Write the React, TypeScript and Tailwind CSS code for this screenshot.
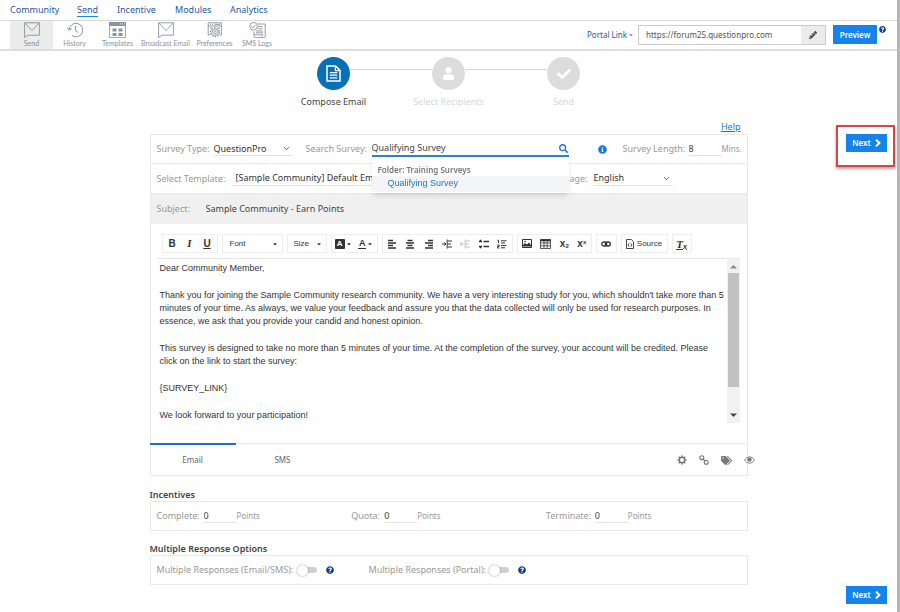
import { useState } from "react";
import type { ReactNode } from "react";
import {
  FaCaretDown,
  FaCheck,
  FaInfoCircle,
  FaPencilAlt,
  FaQuestionCircle,
  FaSearch,
  FaTags,
  FaUser,
} from "react-icons/fa";
import { FiChevronDown } from "react-icons/fi";

const navLinks = [
  { label: "Community", width: "w-[67px]" },
  { label: "Send", width: "w-10", active: true },
  { label: "Incentive", width: "w-[58px]" },
  { label: "Modules", width: "w-[55px]" },
  { label: "Analytics", width: "w-12" },
];

function MailIcon() {
  return (
    <svg width="16" height="16" viewBox="0 0 16 16" fill="none" stroke="currentColor" strokeWidth="0.9">
      <path d="M.6.8h14.8v12.4H4L.6 15.6z" />
      <path d="M.8 1L8 8.6 15.2 1" />
    </svg>
  );
}

function HistoryIcon() {
  return (
    <svg width="16" height="16" viewBox="0 0 16 16" fill="none" stroke="currentColor" strokeWidth="1">
      <path d="M2.2 7.5A6.8 6.8 0 1 1 5 13.6" />
      <path d="M.4 5.6l1.8 2.6 2.6-1.8M8.4 3.8v4.6l3 2.4" />
    </svg>
  );
}

function TemplatesIcon() {
  return (
    <svg width="17" height="16" viewBox="0 0 17 16" fill="none" stroke="currentColor">
      <path d="M.5.5h16v15H.5z" strokeWidth="0.8" />
      <path d="M0 0h17v4H0z" fill="currentColor" stroke="none" />
      <path d="M11 1.8h1M13 1.8h1M15 1.8h1" stroke="#fff" strokeWidth="0.8" />
      <path d="M3.5 6.5h4v3h-4zM9.5 6.5h4v3h-4zM3.5 11h4v3h-4zM9.5 11h4v3h-4z" fill="currentColor" stroke="none" />
    </svg>
  );
}

function PreferencesIcon() {
  return (
    <svg width="16" height="16" viewBox="0 0 16 16" fill="none" stroke="currentColor" strokeWidth="0.9">
      <path d="M3 13H1.2V.8h13.2V13h-1.6M1.2 4h13.2M3 2.4h1M5 2.4h1M7.5 2.4h5.5M3 6h2M11 6h2" />
      <circle cx="8" cy="10.2" r="3.2" />
      <circle cx="8" cy="10.2" r="1.3" />
      <circle cx="8" cy="10.2" r="4.5" strokeDasharray="1.6 1.2" strokeWidth="1.3" />
    </svg>
  );
}

function LogsIcon() {
  return (
    <svg width="17" height="16" viewBox="0 0 17 16" fill="none" stroke="currentColor" strokeWidth="0.9">
      <circle cx="4.6" cy="4.2" r="3.8" />
      <path d="M2.6 4.4l1.4 1.4 2.6-3M8.6 2h7.6v12.4a1.2 1.2 0 0 1-1.2 1.2H6.4a1.4 1.4 0 0 1-1.4-1.4V9.4M5 12.8h8.4v1.6M8.8 4.6h5M8.8 6.8h5M7 9h6.8M7 10.8h6.8" />
    </svg>
  );
}

const tools = [
  { label: "Send", icon: <MailIcon />, className: "w-[43px] bg-[#ececec]" },
  { label: "History", icon: <HistoryIcon />, className: "w-[43px]" },
  { label: "Templates", icon: <TemplatesIcon />, className: "w-[43px]" },
  { label: "Broadcast Email", icon: <MailIcon />, className: "w-[53px]" },
  { label: "Preferences", icon: <PreferencesIcon />, className: "w-[45px]" },
  { label: "SMS Logs", icon: <LogsIcon />, className: "w-10" },
];

function DocumentIcon() {
  return (
    <svg width="15" height="17" viewBox="0 0 15 17" fill="none" stroke="currentColor" strokeWidth="1.5">
      <path d="M1 1h8.6L14 5.4V16H1z" />
      <path d="M9.4 1v4.6H14M3.8 7.6h7.4M3.8 10.2h7.4M3.8 12.8h7.4" strokeWidth="1.2" />
    </svg>
  );
}

type StepProps = {
  label: string;
  icon: ReactNode;
  active?: boolean;
  first?: boolean;
  last?: boolean;
};

function Step({ label, icon, active, first, last }: StepProps) {
  return (
    <li className="flex flex-col items-center">
      <div className="flex w-full items-start">
        <span className={`mt-3 h-px flex-1 ${first ? "" : "bg-[#d4d4d4]"}`} />
        <span
          className={`flex size-[33px] items-center justify-center rounded-full text-white ${
            active ? "bg-[#0870b5]" : "bg-[#dcdcdc]"
          }`}
        >
          {icon}
        </span>
        <span className={`mt-3 h-px flex-1 ${last ? "" : "bg-[#d4d4d4]"}`} />
      </div>
      <span className={`mt-1 leading-4 ${active ? "text-[#444]" : "text-[#d8d8d8]"}`}>{label}</span>
    </li>
  );
}

function NextButton() {
  return (
    <button
      type="button"
      className="flex h-[18px] w-[41px] items-center justify-center gap-1 bg-[#1583e9] text-[8px] font-semibold text-white"
    >
      Next
      <svg width="6" height="8" viewBox="0 0 6 8" fill="none" stroke="currentColor" strokeWidth="2">
        <path d="M1 .8L4.4 4 1 7.2" />
      </svg>
    </button>
  );
}

type SelectProps = {
  id: string;
  value: string;
  className: string;
};

function Select({ id, value, className }: SelectProps) {
  return (
    <div className={`flex h-[14px] items-center border-b border-[#e4e4e4] text-[#333] ${className}`}>
      <select id={id} className="min-w-0 flex-1 appearance-none bg-transparent outline-none">
        <option>{value}</option>
      </select>
      <FiChevronDown size={9} className="mr-[2px] shrink-0" />
    </div>
  );
}

function ToolGroup({ children, className }: { children: ReactNode; className: string }) {
  return (
    <div className={`flex h-[19px] items-center justify-around border border-[#eee] text-[#333] ${className}`}>
      {children}
    </div>
  );
}

function ToolButton({ label, children }: { label: string; children: ReactNode }) {
  return (
    <button type="button" aria-label={label} className="flex items-center justify-center">
      {children}
    </button>
  );
}

function LineIcon({ d, className }: { d: string; className?: string }) {
  return (
    <svg width="10" height="10" viewBox="0 0 10 10" stroke="currentColor" strokeWidth="1.4" fill="none" className={className}>
      <path d={d} />
    </svg>
  );
}

function EditorToolbar() {
  return (
    <div className="flex gap-1 border-b border-[#e6e6e6] pt-[10px] pb-[5px] pl-[5px] font-['Liberation_Sans',sans-serif] text-[8px]">
      <ToolGroup className="w-14 text-[10px]">
        <button type="button" className="font-bold">B</button>
        <button type="button" className="font-['Liberation_Serif',serif] text-[11px] font-bold italic">I</button>
        <button type="button" className="font-bold underline">U</button>
      </ToolGroup>
      <ToolGroup className="w-[61px]">
        <button type="button" className="flex w-full items-center justify-between pr-1 pl-[7px]">
          Font <FaCaretDown size={6} />
        </button>
      </ToolGroup>
      <ToolGroup className="w-10">
        <button type="button" className="flex w-full items-center justify-between pr-1 pl-[6px]">
          Size <FaCaretDown size={6} />
        </button>
      </ToolGroup>
      <ToolGroup className="w-[47px]">
        <ToolButton label="Background color">
          <span className="mr-px flex size-[10px] items-center justify-center rounded-[1px] bg-[#333] font-bold text-white">A</span>
          <FaCaretDown size={6} />
        </ToolButton>
        <ToolButton label="Text color">
          <span className="mr-px border-b border-[#333] px-px text-[9px] leading-[9px] font-bold">A</span>
          <FaCaretDown size={6} />
        </ToolButton>
      </ToolGroup>
      <ToolGroup className="w-[131px]">
        <ToolButton label="Align left"><LineIcon d="M1 1.5h5M1 4h8M1 6.5h5M1 9h8" /></ToolButton>
        <ToolButton label="Align center"><LineIcon d="M2.5 1.5h5M1 4h8M2.5 6.5h5M1 9h8" /></ToolButton>
        <ToolButton label="Align right"><LineIcon d="M4 1.5h5M1 4h8M4 6.5h5M1 9h8" /></ToolButton>
        <ToolButton label="Increase indent"><LineIcon d="M0 5h4M2.4 3.4L4 5 2.4 6.6M5.2.5v9M6 2h4M6 5h3M6 8h4" className="[stroke-width:1]" /></ToolButton>
        <ToolButton label="Decrease indent"><LineIcon d="M0 5h4M1.6 3.4L0 5l1.6 1.6M5.2.5v9M6 2h4M6 5h3M6 8h4" className="text-[#bbb] [stroke-width:1]" /></ToolButton>
        <ToolButton label="Bulleted list"><LineIcon d="M0 2.5h3M0 7.5h3M4.5 2.5H10M4.5 7.5H10M.7 1.5h1.6M.7 8.5h1.6" /></ToolButton>
        <ToolButton label="Numbered list"><LineIcon d="M.5 1.2h1v3M.4 6h1.8v1.4H.6V9h1.8M4 1.8h5.5M4 4h4M4 6.6h5.5M4 8.8h4" className="[stroke-width:1]" /></ToolButton>
      </ToolGroup>
      <ToolGroup className="w-[75px]">
        <ToolButton label="Image">
          <svg width="10" height="9" viewBox="0 0 10 9">
            <path d="M.5.5h9v8h-9z" fill="none" stroke="currentColor" />
            <path d="M1 7.6V6l2-2 2 1.5L7 3.4 9 6v1.6z" fill="currentColor" />
            <circle cx="3" cy="2.5" r="0.8" fill="currentColor" />
          </svg>
        </ToolButton>
        <ToolButton label="Table">
          <svg width="11" height="10" viewBox="0 0 11 10" fill="none" stroke="currentColor" strokeWidth="0.8">
            <path d="M.5.5h10v9H.5zM.5 4h10M.5 6.8h10M4 1v8M7.2 1v8" />
            <path d="M.5 1.3h10" strokeWidth="2" />
          </svg>
        </ToolButton>
        <button type="button" className="text-[10px] leading-3 font-bold">x<sub className="text-[6px]">2</sub></button>
        <button type="button" className="text-[10px] leading-3 font-bold">x<sup className="text-[6px]">x</sup></button>
      </ToolGroup>
      <ToolGroup className="w-[21px]">
        <ToolButton label="Link">
          <svg width="10" height="6" viewBox="0 0 10 6" fill="none" stroke="currentColor" strokeWidth="1.3">
            <rect x="0.7" y="1" width="5" height="4" rx="2" />
            <rect x="4.3" y="1" width="5" height="4" rx="2" />
          </svg>
        </ToolButton>
      </ToolGroup>
      <ToolGroup className="w-[47px]">
        <button type="button" className="flex items-center gap-[3px]">
          <svg width="8" height="10" viewBox="0 0 8 10" fill="none" stroke="currentColor" strokeWidth="0.9">
            <path d="M.5.5h4.8l2.2 2.2v6.8h-7zM3.2 4.4L2 6l1.2 1.6M4.8 4.4L6 6 4.8 7.6" />
          </svg>
          Source
        </button>
      </ToolGroup>
      <ToolGroup className="w-5">
        <button type="button" aria-label="Remove format" className="font-['Liberation_Serif',serif] text-[11px] leading-3 font-bold italic underline">
          T<sub className="font-['Liberation_Sans',sans-serif] text-[7px]">x</sub>
        </button>
      </ToolGroup>
    </div>
  );
}

function EditorBody() {
  return (
    <div className="flex h-[164px]">
      <div
        contentEditable
        suppressContentEditableWarning
        role="textbox"
        aria-label="Email body"
        className="flex flex-1 flex-col gap-[14px] pt-[3px] pl-[3px] font-['Liberation_Sans',sans-serif] text-[9px] leading-[13px] text-[#333] outline-none"
      >
        <p>Dear Community Member,</p>
        <p>
          Thank you for joining the Sample Community research community. We have a very interesting study for you, which
          shouldn't take more than 5 minutes of your time. As always, we value your feedback and assure you that the data
          collected will only be used for research purposes. In essence, we ask that you provide your candid and honest
          opinion.
        </p>
        <p>
          This survey is designed to take no more than 5 minutes of your time. At the completion of the survey, your
          account will be credited. Please click on the link to start the survey:
        </p>
        <p>{"{SURVEY_LINK}"}</p>
        <p>We look forward to your participation!</p>
      </div>
      <div className="flex w-[13px] flex-col items-center bg-[#f1f1f1]">
        <svg width="7" height="14" viewBox="0 0 7 14" fill="#888">
          <path d="M0 9.5h7L3.5 6z" />
        </svg>
        <div className="h-[114px] w-[11px] bg-[#c1c1c1]" />
        <svg width="7" height="14" viewBox="0 0 7 14" fill="#444" className="mt-auto">
          <path d="M0 4.5h7L3.5 8z" />
        </svg>
      </div>
    </div>
  );
}

const points = [
  { label: "Complete:", width: "w-[47px]" },
  { label: "Quota:", width: "w-[33px]" },
  { label: "Terminate:", width: "w-[49px]" },
];

const toggles = [
  { label: "Multiple Responses (Email/SMS):", width: "w-[140px]" },
  { label: "Multiple Responses (Portal):", width: "w-[120px]" },
];

function App() {
  const [search, setSearch] = useState("Qualifying Survey");

  return (
    <div className="flex min-h-screen flex-col border-r-[3px] border-[#b5b5b5] bg-white font-['Noto_Sans',sans-serif] text-[9px] text-[#999]">
      <nav className="flex h-[21px] items-center border-b border-[#d9d9d9] pl-[10px] text-[#1b5a9e]">
        {navLinks.map((link) => (
          <div key={link.label} className={link.width}>
            <a href="#" className={`leading-3 ${link.active ? "border-b border-[#1b87e6]" : ""}`}>
              {link.label}
            </a>
          </div>
        ))}
      </nav>

      <header className="flex h-[30px] items-start justify-between border-b-2 border-[#dedede] pr-[11px] pl-[10px]">
        <div className="flex">
          {tools.map((tool) => (
            <button
              key={tool.label}
              type="button"
              className={`flex h-7 flex-col items-center pt-px font-['Lato',sans-serif] text-[7px] leading-[10px] whitespace-nowrap text-[#8a929a] ${tool.className}`}
            >
              {tool.icon}
              {tool.label}
            </button>
          ))}
        </div>
        <div className="flex items-start pt-1 text-[8px]">
          <button type="button" className="mr-1 flex h-[19px] items-center gap-px text-[#1b5a9e]">
            Portal Link <FaCaretDown size={6} className="text-[#888]" />
          </button>
          <div className="mr-[7px] flex h-5 border border-[#ccc]">
            <input
              aria-label="Portal link"
              readOnly
              value="https://forum25.questionpro.com"
              className="w-[162px] pl-[7px] text-[#555] outline-none"
            />
            <button type="button" aria-label="Edit" className="flex w-6 items-center justify-center bg-[#ececec] text-[#444]">
              <FaPencilAlt size={8} />
            </button>
          </div>
          <button type="button" className="h-[19px] w-11 rounded-[1px] bg-[#1583e9] font-semibold text-white">
            Preview
          </button>
          <FaQuestionCircle size={7} className="ml-[2px] mt-px text-[#0b3f8a]" />
        </div>
      </header>

      <ol className="mx-auto mt-[6px] grid w-full max-w-[345px] grid-cols-3">
        <Step label="Compose Email" icon={<DocumentIcon />} active first />
        <Step label="Select Recipients" icon={<FaUser size={13} />} />
        <Step label="Send" icon={<FaCheck size={14} />} last />
      </ol>

      <main className="mt-[10px] grid grid-cols-[1fr_minmax(0,598px)_1fr]">
        <div />
        <form>
          <div className="flex h-[14px] justify-end pr-[7px] leading-[14px]">
            <a href="#" className="text-[#1b78d8] underline">Help</a>
          </div>

          <section className="border border-[#e8e8e8]">
            <div className="flex h-[29px] items-center border-b border-[#e8e8e8] pl-[6px] whitespace-nowrap">
              <label htmlFor="type" className="w-[57px]">Survey Type:</label>
              <Select id="type" value="QuestionPro" className="mr-[13px] w-[79px]" />
              <label htmlFor="search" className="w-[66px]">Search Survey:</label>
              <div className="relative mr-[29px] flex h-[15px] w-[197px] items-center border-b-2 border-[#2a82cf]">
                <input
                  id="search"
                  autoFocus
                  autoComplete="off"
                  value={search}
                  onChange={(e) => setSearch(e.target.value)}
                  className="min-w-0 flex-1 text-[#444] outline-none"
                />
                <FaSearch size={9} className="mr-px text-[#1b78d8]" />
                <div className="absolute top-[15px] left-0 z-10 h-9 w-full bg-white pt-[7px] text-[8px] font-semibold text-[#777] shadow-md">
                  <div className="pl-[6px] leading-3">Folder: Training Surveys</div>
                  <button
                    type="button"
                    className="block h-4 w-full bg-[#f3f5f6] pl-4 text-left font-['Liberation_Sans',sans-serif] text-[9px] font-normal text-[#1b78d8]"
                  >
                    Qualifying Survey
                  </button>
                </div>
              </div>
              <FaInfoCircle size={9} className="mr-4 text-[#1b78d8]" />
              <label htmlFor="length" className="w-[66px]">Survey Length:</label>
              <input id="length" defaultValue="8" className="h-[14px] w-[33px] border-b border-[#e4e4e4] text-[#444] outline-none" />
              <span className="text-[8px]">Mins.</span>
            </div>

            <div className="flex h-[30px] items-center border-b border-[#e8e8e8] pl-[6px] whitespace-nowrap">
              <label htmlFor="template" className="w-[74px]">Select Template:</label>
              <Select id="template" value="[Sample Community] Default Email Template" className="w-[300px] pl-[5px]" />
              <label htmlFor="language" className="w-[63px] pr-[6px] text-right">Language:</label>
              <Select id="language" value="English" className="w-[79px]" />
            </div>

            <div className="flex h-[30px] items-center bg-[#f0f0f0] pl-[6px]">
              <label htmlFor="subject" className="w-[49px]">Subject:</label>
              <input id="subject" defaultValue="Sample Community - Earn Points" className="flex-1 bg-transparent text-[#444] outline-none" />
            </div>

            <div className="pr-[7px] pb-5 pl-[6px]">
              <EditorToolbar />
              <EditorBody />
            </div>

            <div className="flex h-8 items-start justify-between border-t border-[#e8e8e8] text-[8px] text-[#666]">
              <div className="-ml-px flex" role="tablist">
                <button type="button" role="tab" aria-selected="true" className="-mt-px h-8 w-[86px] border-t-2 border-[#1b6fc4]">
                  Email
                </button>
                <button type="button" role="tab" aria-selected="false" className="h-8 w-[94px]">SMS</button>
              </div>
              <div className="-mr-2 flex h-8 items-center gap-3 text-[#777]">
                <button type="button" aria-label="Settings">
                  <svg width="10" height="10" viewBox="0 0 10 10" fill="none" stroke="currentColor">
                    <circle cx="5" cy="5" r="2.7" strokeWidth="1.5" />
                    <path d="M5 .4v1.4M5 8.2v1.4M.4 5h1.4M8.2 5h1.4M1.7 1.7l1 1M7.3 7.3l1 1M1.7 8.3l1-1M7.3 2.7l1-1" strokeWidth="1.6" />
                  </svg>
                </button>
                <button type="button" aria-label="Insert link">
                  <svg width="10" height="10" viewBox="0 0 10 10" fill="none" stroke="currentColor" strokeWidth="1.1">
                    <circle cx="2.8" cy="2.8" r="2" />
                    <circle cx="7.2" cy="7.2" r="2" />
                    <path d="M3.6 3.6l2.8 2.8" />
                  </svg>
                </button>
                <button type="button" aria-label="Tags"><FaTags size={11} /></button>
                <button type="button" aria-label="View">
                  <svg width="11" height="8" viewBox="0 0 11 8" fill="none" stroke="currentColor" strokeWidth="0.9">
                    <path d="M.6 4C3-.2 8-.2 10.4 4 8 8.2 3 8.2.6 4z" />
                    <circle cx="5.5" cy="3.6" r="1.8" fill="currentColor" />
                  </svg>
                </button>
              </div>
            </div>
          </section>

          <h2 className="mt-3 h-[13px] leading-[13px] font-semibold text-[#444]">Incentives</h2>
          <section className="grid h-[30px] grid-cols-3 items-center border border-[#e8e8e8] px-[6px]">
            {points.map((item) => (
              <div key={item.label} className="flex items-center">
                <label htmlFor={item.label} className={item.width}>{item.label}</label>
                <input id={item.label} defaultValue="0" className="h-[14px] w-[33px] border-b border-[#e4e4e4] text-[#444] outline-none" />
                <span className="text-[8px]">Points</span>
              </div>
            ))}
          </section>

          <h2 className="mt-[11px] h-[13px] leading-[13px] font-semibold text-[#444]">Multiple Response Options</h2>
          <section className="flex h-[30px] items-center gap-[35px] border border-[#e8e8e8] px-[6px]">
            {toggles.map((item) => (
              <div key={item.label} className="flex items-center">
                <label htmlFor={item.label} className={`whitespace-nowrap ${item.width}`}>{item.label}</label>
                <input
                  id={item.label}
                  type="checkbox"
                  className="flex h-[6px] w-5 appearance-none items-center rounded-full bg-[#d0d0d0] before:size-[11px] before:rounded-full before:bg-white before:shadow-[0_0_2px_#888] checked:justify-end checked:bg-[#1b87e6]"
                />
                <FaQuestionCircle size={8} className="ml-[9px] text-[#0b3f8a]" />
              </div>
            ))}
          </section>
        </form>

        <div className="flex items-start justify-end pt-[5px] pr-[2px]">
          <div className="flex h-[42px] items-start border-2 border-[#d64545] px-2 pt-[7px] pr-[6px] shadow-[0_2px_3px_rgba(0,0,0,0.35)]">
            <NextButton />
          </div>
        </div>
      </main>

      <footer className="mt-auto flex justify-end pr-[10px] pb-2">
        <NextButton />
      </footer>
    </div>
  );
}

export default App;
